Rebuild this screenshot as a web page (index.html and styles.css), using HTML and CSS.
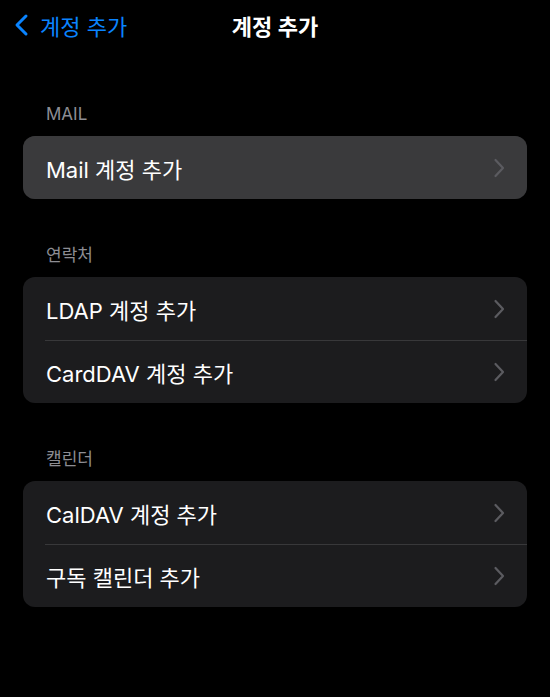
FILE: index.html
```html
<!DOCTYPE html>
<html lang="ko">
<head>
    <meta charset="UTF-8">
    <meta name="viewport" content="width=device-width, initial-scale=1.0">
    <title>계정 추가</title>
    <link rel="stylesheet" href="styles.css">
</head>
<body>
    <div class="nav-bar">
        <a class="back-link" href="#">
            <svg class="back-icon" width="18" height="24" viewBox="0 0 18 24">
                <path d="M14 3 L5 12 L14 21" fill="none" stroke="#0a84ff" stroke-width="3" stroke-linecap="round" stroke-linejoin="round"/>
            </svg>
            <span>계정 추가</span>
        </a>
        <div class="nav-title">계정 추가</div>
    </div>

    <div class="section first">
        <div class="section-label">MAIL</div>
        <div class="card">
            <div class="row highlighted">
                <span class="row-text">Mail 계정 추가</span>
                <svg class="chevron" width="12" height="20" viewBox="0 0 12 20"><path d="M2.5 2 L10 10 L2.5 18" fill="none" stroke-width="2.2" stroke-linecap="round" stroke-linejoin="round"/></svg>
            </div>
        </div>
    </div>

    <div class="section">
        <div class="section-label">연락처</div>
        <div class="card">
            <div class="row">
                <span class="row-text">LDAP 계정 추가</span>
                <svg class="chevron" width="12" height="20" viewBox="0 0 12 20"><path d="M2.5 2 L10 10 L2.5 18" fill="none" stroke-width="2.2" stroke-linecap="round" stroke-linejoin="round"/></svg>
            </div>
            <div class="row">
                <span class="row-text">CardDAV 계정 추가</span>
                <svg class="chevron" width="12" height="20" viewBox="0 0 12 20"><path d="M2.5 2 L10 10 L2.5 18" fill="none" stroke-width="2.2" stroke-linecap="round" stroke-linejoin="round"/></svg>
            </div>
        </div>
    </div>

    <div class="section">
        <div class="section-label">캘린더</div>
        <div class="card">
            <div class="row">
                <span class="row-text">CalDAV 계정 추가</span>
                <svg class="chevron" width="12" height="20" viewBox="0 0 12 20"><path d="M2.5 2 L10 10 L2.5 18" fill="none" stroke-width="2.2" stroke-linecap="round" stroke-linejoin="round"/></svg>
            </div>
            <div class="row">
                <span class="row-text">구독 캘린더 추가</span>
                <svg class="chevron" width="12" height="20" viewBox="0 0 12 20"><path d="M2.5 2 L10 10 L2.5 18" fill="none" stroke-width="2.2" stroke-linecap="round" stroke-linejoin="round"/></svg>
            </div>
        </div>
    </div>
</body>
</html>
```

FILE: styles.css
```css
body {
    margin: 0;
    background-color: #000;
    color: #fff;
    font-family: Inter, "Noto Sans CJK KR", sans-serif;
}
.nav-bar {
    position: relative;
    height: 50px;
    display: flex;
    align-items: center;
    justify-content: center;
}
.back-link {
    position: absolute;
    left: 12px;
    top: 0;
    height: 50px;
    display: flex;
    align-items: center;
    gap: 10px;
    color: #0a84ff;
    text-decoration: none;
    font-size: 22px;
}
.back-icon {
    display: block;
}
.nav-title {
    font-size: 22px;
    font-weight: 600;
}
.section {
    margin: 46px 23px 0;
}
.section.first {
    margin-top: 54px;
}
.section-label {
    height: 20px;
    line-height: 20px;
    padding-left: 23px;
    margin-bottom: 12px;
    font-size: 17px;
    color: #8d8d93;
}
.card {
    background-color: #1c1c1e;
    border-radius: 12px;
    overflow: hidden;
}
.row {
    position: relative;
    height: 63px;
    display: flex;
    align-items: center;
    justify-content: space-between;
    padding: 0 22px 0 23px;
    font-size: 22px;
}
.row + .row::before {
    content: "";
    position: absolute;
    top: 0;
    left: 22px;
    right: 0;
    height: 1px;
    background-color: #38383a;
}
.row.highlighted {
    background-color: #3a3a3c;
}
.chevron {
    display: block;
    stroke: #5b5b60;
}
```
